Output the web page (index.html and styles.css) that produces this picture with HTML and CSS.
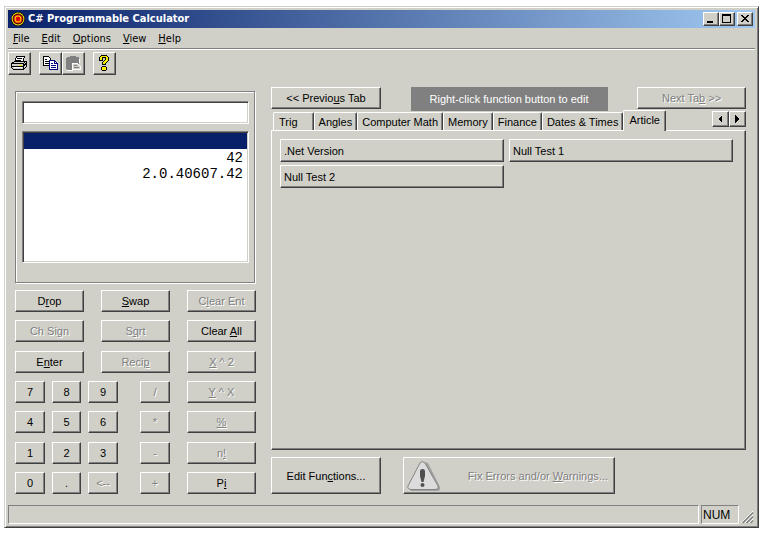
FILE: index.html
```html
<!DOCTYPE html>
<html lang="en">
<head>
<meta charset="utf-8">
<title>C# Programmable Calculator</title>
<link rel="stylesheet" href="styles.css">
</head>
<body>
<div class="window">
  <header class="titlebar">
    <svg class="app-icon" viewBox="0 0 14 14" aria-hidden="true">
      <circle cx="7" cy="7" r="7" fill="#000"/><circle cx="7" cy="7" r="6.4" fill="#f8e800"/>
      <circle cx="7" cy="7" r="5.4" fill="#200000"/><circle cx="7" cy="7" r="4.6" fill="#e01010"/>
      <circle cx="7" cy="7" r="3.4" fill="#f8d800"/><circle cx="7" cy="7" r="2.4" fill="#e00000"/>
    </svg>
    <h1>C# Programmable Calculator</h1>
    <button class="raised caption" aria-label="Minimize"><svg viewBox="0 0 12 10"><path d="M2 7h6v2H2z"/></svg></button>
    <button class="raised caption" aria-label="Maximize"><svg viewBox="0 0 12 10"><path fill-rule="evenodd" d="M1 0h9v9H1zM2 2v6h7V2z"/></svg></button>
    <button class="raised caption close" aria-label="Close"><svg viewBox="0 0 12 10"><path d="M2 1h2v1h1v1h2V2h1V1h2v1H9v1H8v1H7v1h1v1h1v1h1v1H8V7H7V6H5v1H4v1H2V7h1V6h1V5h1V4H4V3H3V2H2z"/></svg></button>
  </header>
  <nav class="menubar">
    <button><u>F</u>ile</button>
    <button><u>E</u>dit</button>
    <button><u>O</u>ptions</button>
    <button><u>V</u>iew</button>
    <button><u>H</u>elp</button>
  </nav>
  <div class="toolbar">
    <button class="raised tool" aria-label="Print"><svg viewBox="0 0 18 16">
      <path fill="#fff" stroke="#000" d="M6.5 1.5h8l-2 6h-8z"/><path stroke="#000" d="M7 3.5h5M6 5.5h5"/>
      <path fill="#d0d0c8" stroke="#000" d="M1.500 8.500l3-2h12v5l-3 3h-10l-2-2z"/><path fill="none" stroke="#000" d="M2 8.500h11l3-2M13.500 9v5M2 11.500h11l3-3"/>
      <path fill="#f0e000" d="M9 10h3v1H9z"/><path fill="#fff" d="M4 12h8v1H4z"/></svg></button>
    <span class="tool-pair">
      <button class="raised tool" aria-label="Copy"><svg viewBox="0 0 18 16">
        <path fill="#fff" stroke="#000" d="M2.500 1.500h5l2 2v7h-7z"/><path stroke="#000" d="M4 4.500h2M4 6.500h4M4 8.500h4"/>
        <path fill="#fff" stroke="#000080" d="M8.500 5.500h5l3 3v6h-8z"/><path fill="none" stroke="#000080" d="M13.500 5v3.500H17M10 8.500h2M10 10.500h5M10 12.500h5"/></svg></button>
      <button class="raised tool" aria-label="Paste" disabled><svg viewBox="0 0 18 16">
        <path fill="#fff" d="M15 4h1v4h-1zM3 15h6v1H3z"/>
        <path fill="#808080" d="M3 2h3V1h6v1h2l1 1v11l-1 1H3l-1-1V3z"/>
        <path fill="#d0d0c8" stroke="#fff" d="M8.500 8.500h5l3 3v3h-8z"/><path stroke="#808080" d="M10 10.500h3M10 12.500h5"/></svg></button>
    </span>
    <button class="raised tool" aria-label="Help"><svg viewBox="0 0 18 16">
      <path d="M6 0h6v1h1v1h1v4h-1v1h-1v1h-1v2H7V7h1V6h1V5h1V3H8v3H4V2h1V1h1zM7 11h4v1h1v3h-1v1H7v-1H6v-3h1z"/>
      <path fill="#f8f000" d="M6 1h6v1h1v4h-1v1h-1v1h-1v1H8V7h1V6h1V5h1V2H7v3H5V2h1zM7 12h4v3H7z"/></svg></button>
  </div>
  <main class="workspace">
    <section class="calculator">
      <div class="display">
        <input class="sunken entry" type="text" aria-label="Entry">
        <ul class="sunken stack" role="listbox" aria-label="Stack">
          <li class="selected" role="option" aria-selected="true"></li>
          <li role="option">42</li>
          <li role="option">2.0.40607.42</li>
        </ul>
      </div>
      <div class="keypad">
        <div class="keys"><button class="raised">D<u>r</u>op</button><button class="raised"><u>S</u>wap</button><button class="raised" disabled>C<u>l</u>ear Ent</button></div>
        <div class="keys"><button class="raised" disabled>Ch Si<u>g</u>n</button><button class="raised" disabled>S<u>q</u>rt</button><button class="raised">Clear <u>A</u>ll</button></div>
        <div class="keys"><button class="raised">E<u>n</u>ter</button><button class="raised" disabled>Reci<u>p</u></button><button class="raised" disabled><u>X</u> ^ 2</button></div>
        <div class="keys digits"><button class="raised">7</button><button class="raised">8</button><button class="raised">9</button><button class="raised operator" disabled>/</button><button class="raised" disabled><u>Y</u> ^ X</button></div>
        <div class="keys digits"><button class="raised">4</button><button class="raised">5</button><button class="raised">6</button><button class="raised operator" disabled>*</button><button class="raised" disabled><u>%</u></button></div>
        <div class="keys digits"><button class="raised">1</button><button class="raised">2</button><button class="raised">3</button><button class="raised operator" disabled>-</button><button class="raised" disabled>n<u>!</u></button></div>
        <div class="keys digits"><button class="raised">0</button><button class="raised">.</button><button class="raised" disabled>&lt;--</button><button class="raised operator" disabled>+</button><button class="raised">P<u>i</u></button></div>
      </div>
    </section>
    <section class="functions">
      <div class="tab-nav">
        <button class="raised">&lt;&lt; Previo<u>u</u>s Tab</button>
        <p class="hint">Right-click function button to edit</p>
        <button class="raised" disabled>Next Ta<u>b</u> &gt;&gt;</button>
      </div>
      <div class="tab-strip">
        <div class="tabs" role="tablist">
          <button class="tab first" role="tab">Trig</button>
          <button class="tab" role="tab">Angles</button>
          <button class="tab" role="tab">Computer Math</button>
          <button class="tab" role="tab">Memory</button>
          <button class="tab" role="tab">Finance</button>
          <button class="tab" role="tab">Dates &amp; Times</button>
          <button class="tab active" role="tab" aria-selected="true">Article</button>
        </div>
        <button class="raised scroll" aria-label="Scroll tabs left"><svg viewBox="0 0 8 8"><path d="M6 0v8L2 4z"/></svg></button>
        <button class="raised scroll" aria-label="Scroll tabs right"><svg viewBox="0 0 8 8"><path d="M2 0v8l4-4z"/></svg></button>
      </div>
      <div class="raised panel" role="tabpanel">
        <button class="raised">.Net Version</button>
        <button class="raised">Null Test 1</button>
        <button class="raised">Null Test 2</button>
      </div>
      <div class="actions">
        <button class="raised edit">Edit Fun<u>c</u>tions...</button>
        <button class="raised fix" disabled>
          <svg viewBox="0 0 34 32" aria-hidden="true">
            <path fill="#a0a0a0" d="M18 3q2-2 4 2l11 22q1 4-3 4H6q-3 0-3-2z"/>
            <path fill="#dcdcdc" stroke="#848484" d="M13 3q2-3 5 0l13 23q1 3-3 3.500H4q-4-.5-3-3.500z"/>
            <path fill="#505050" d="M13 11q0-2 2.500-2t2.500 2v5l-1.500 6h-2L13 16z"/><circle cx="15.500" cy="25" r="2" fill="#505050"/>
          </svg>
          <span>Fix Errors and/or <u>W</u>arnings...</span>
        </button>
      </div>
    </section>
  </main>
  <footer class="statusbar">
    <div class="cell message"></div>
    <div class="cell num">NUM</div>
    <svg class="grip" viewBox="0 0 14 14" aria-hidden="true"><path stroke="#fff" d="M0 13L12 1M4 13l8-8M8 13l4-4"/><path stroke="#808080" stroke-width="1.500" d="M1.500 13L12 2.500M5.500 13L12 6.500M9.500 13l2.500-2.500"/></svg>
  </footer>
</div>
</body>
</html>
```
FILE: styles.css
```css
:root {
  --face: #d0d0c8;
  --shadow: #808080;
  --dark: #404040;
  --navy: #082068;
}
* { box-sizing: border-box; }
body {
  margin: 0;
  min-height: 100vh;
  padding: 6px 18px 5px 4px;
  display: flex;
  background: #fff;
  font: 11px/14px "Liberation Sans", Arial, sans-serif;
  color: #000;
}
button, input { font: inherit; color: inherit; }
button {
  margin: 0;
  padding: 0;
  border: 0;
  background: none;
  white-space: nowrap;
}
svg { display: block; fill: #000; }
u { text-underline-offset: 1px; }

.window {
  flex: 1;
  display: flex;
  flex-direction: column;
  padding: 3px;
  border: 1px solid;
  border-color: var(--face) var(--dark) var(--dark) var(--face);
  box-shadow: inset 1px 1px #fff, inset -1px -1px var(--shadow);
  background: var(--face);
}
.raised {
  background: var(--face);
  border: 1px solid;
  border-color: #fff var(--dark) var(--dark) #fff;
  box-shadow: inset -1px -1px var(--shadow);
}
.raised:disabled {
  color: var(--shadow);
  text-shadow: 1px 1px #fff;
}
.sunken {
  background: #fff;
  border: 1px solid;
  border-color: var(--shadow) #fff #fff var(--shadow);
  box-shadow: inset 1px 1px var(--dark), inset -1px -1px var(--face);
}

.titlebar {
  display: flex;
  align-items: center;
  height: 18px;
  padding: 0 2px 0 3px;
  background: linear-gradient(90deg, #082068, #a0c8f0);
}
.app-icon { width: 14px; height: 14px; margin-right: 3px; }
.titlebar h1 {
  flex: 1;
  margin: 0;
  color: #fff;
  font: bold 11px/18px "DejaVu Sans Condensed", Tahoma, sans-serif;
}
.caption { width: 16px; height: 14px; padding: 1px; }
.caption svg { width: 12px; height: 10px; shape-rendering: crispEdges; }
.close { margin-left: 2px; }

.menubar {
  display: flex;
  gap: 12px;
  height: 21px;
  padding: 1px 5px 0;
  border-bottom: 1px solid var(--shadow);
  font: 11px/20px "DejaVu Sans Condensed", Tahoma, sans-serif;
}
.toolbar {
  display: flex;
  gap: 8px;
  padding-top: 2px;
  border-top: 1px solid #fff;
}
.tool-pair { display: flex; }
.tool { width: 23px; height: 23px; padding: 0 1px 2px; }
.tool svg { width: 18px; height: 16px; shape-rendering: crispEdges; }

.workspace {
  flex: 1;
  display: grid;
  grid-template-columns: 241px 1fr;
  gap: 15px;
  padding: 12px 9px 11px 7px;
}
.calculator {
  display: flex;
  flex-direction: column;
  gap: 7px;
  padding-top: 4px;
}
.display {
  display: flex;
  flex-direction: column;
  gap: 7px;
  margin-right: 1px;
  padding: 9px 5px 19px 6px;
  border: 1px solid var(--shadow);
  box-shadow: 1px 1px #fff, inset 1px 1px #fff;
}
.entry, .stack {
  font: 14px/18px "Liberation Mono", "Courier New", monospace;
  text-align: right;
}
.entry { width: 100%; height: 23px; padding: 2px 5px; }
.stack {
  height: 132px;
  margin: 0;
  padding: 1px;
  list-style: none;
}
.stack li { height: 16px; padding-right: 4px; }
.stack .selected { background: var(--navy); color: #fff; }

.keypad {
  flex: 1;
  display: flex;
  flex-direction: column;
  justify-content: space-between;
}
.keys {
  display: grid;
  grid-template-columns: repeat(3, 1fr);
  gap: 17px;
}
.keys button { height: 22px; }
.digits {
  grid-template-columns: 30px 29px 30px 1fr 69px;
  gap: 7px;
}
.operator { width: 30px; margin-right: 10px; justify-self: end; }

.functions { display: flex; flex-direction: column; }
.tab-nav {
  display: grid;
  grid-template-columns: 110px 197px 109px;
  justify-content: space-between;
  height: 23px;
}
.tab-nav button { height: 22px; }
.hint {
  margin: 0;
  background: var(--shadow);
  color: #fff;
  line-height: 24px;
  text-align: center;
}
.tab-strip { display: flex; align-items: flex-start; height: 20px; }
.tabs {
  flex: 1;
  display: flex;
  align-items: flex-end;
  align-self: flex-end;
  padding-left: 2px;
}
.tab {
  height: 18px;
  padding: 0 4px;
  border: 1px solid;
  border-color: #fff var(--dark) transparent #fff;
  border-bottom: 0;
  border-radius: 2px 2px 0 0;
  box-shadow: inset -1px 0 var(--shadow);
}
.first { padding: 0 15px 0 5px; }
.active {
  position: relative;
  height: 21px;
  margin-bottom: -1px;
  padding: 0 5px 2px;
  background: var(--face);
}
.scroll { width: 17px; height: 16px; margin-top: 1px; padding: 0 0 0 3px; }
.scroll svg { width: 8px; height: 8px; shape-rendering: crispEdges; }
.panel {
  flex: 1;
  display: grid;
  grid-template-columns: 1fr 1fr;
  align-content: start;
  gap: 3px 5px;
  padding: 8px 12px 8px 8px;
}
.panel button { height: 23px; padding: 0 3px; text-align: left; }
.actions { display: flex; gap: 22px; margin-top: 7px; }
.actions button { height: 37px; }
.edit { width: 110px; }
.fix {
  display: flex;
  align-items: center;
  justify-content: space-between;
  width: 212px;
  padding: 0 6px 0 3px;
}
.fix svg { width: 34px; height: 32px; }

.statusbar { display: flex; gap: 2px; height: 19px; }
.cell {
  border: 1px solid;
  border-color: var(--shadow) #fff #fff var(--shadow);
}
.message { flex: 1; }
.num { width: 38px; padding-left: 1px; font-size: 12px; line-height: 18px; }
.grip { align-self: flex-end; width: 14px; height: 14px; }
```
